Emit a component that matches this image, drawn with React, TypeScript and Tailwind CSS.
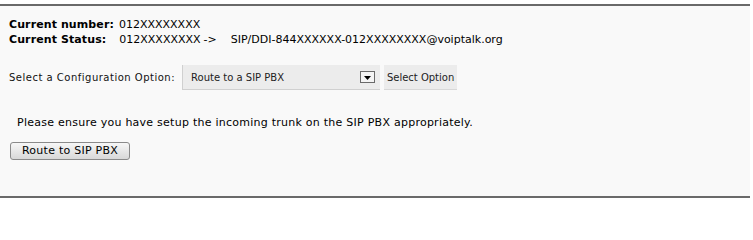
import React from "react";

export default function App() {
  return (
    <div className="w-[753px] h-[203px] bg-white pt-[4px] font-['DejaVu_Sans',Verdana,sans-serif] text-black">
      <div className="w-[750px] h-[194px] bg-[#f9f9f9] border-t-2 border-b-2 border-[#6a6a6a] pl-[9px] pt-[11px]">
        <div className="text-[11px] leading-[15px]">
          <div className="flex">
            <span className="font-bold tracking-[0.1px]">Current number:</span>
            <span className="ml-[5px]">012XXXXXXXX</span>
          </div>
          <div className="flex">
            <span className="font-bold tracking-[0.1px]">Current Status:</span>
            <span className="ml-[13px]">012XXXXXXXX</span>
            <span className="ml-[3px]">-&gt;</span>
            <span className="ml-[14px]">SIP/DDI-844XXXXXX-012XXXXXXXX@voiptalk.org</span>
          </div>
        </div>
        <div className="mt-[18px] flex items-center h-[25px]">
          <span className="text-[10px] tracking-[0.5px] text-[#111]">Select a Configuration Option:</span>
          <div className="ml-[7px] w-[198px] h-[25px] bg-[#ececec] border-l border-b border-[#d0d0d0] flex items-center pl-[8px] pr-[5px]">
            <span className="text-[10px] text-[#222] flex-1">Route to a SIP PBX</span>
            <div className="w-[15px] h-[12px] border border-[#6a6a6a] bg-[#f4f4f4] flex items-end justify-center pb-[2px]">
              <svg width="7" height="4" viewBox="0 0 7 4">
                <path d="M0 0 L7 0 L3.5 4 Z" fill="#000" />
              </svg>
            </div>
          </div>
          <div className="ml-[4px] w-[73px] h-[25px] bg-[#ececec] border-b border-[#d8d8d8] flex items-center justify-center text-[10px] text-[#222]">
            Select Option
          </div>
        </div>
        <div className="mt-[25px] pl-[8px] text-[11px] leading-[15px] tracking-[0.25px]">
          Please ensure you have setup the incoming trunk on the SIP PBX appropriately.
        </div>
        <div className="mt-[7px] ml-[1px]">
          <button className="h-[18px] w-[120px] rounded-[3px] border border-[#8a8a8a] bg-gradient-to-b from-[#f7f7f7] to-[#d8d8d8] text-[11px] leading-[15px] tracking-[0.25px] text-black font-['DejaVu_Sans',Verdana,sans-serif]">
            Route to SIP PBX
          </button>
        </div>
      </div>
    </div>
  );
}
